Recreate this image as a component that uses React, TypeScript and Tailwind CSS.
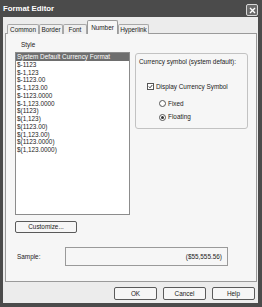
const formats = [
  'System Default Currency Format',
  '$-1123',
  '$-1,123',
  '$-1123.00',
  '$-1,123.00',
  '$-1123.0000',
  '$-1,123.0000',
  '$(1123)',
  '$(1,123)',
  '$(1123.00)',
  '$(1,123.00)',
  '$(1123.0000)',
  '$(1,123.0000)',
];

const tabs = [
  { label: 'Common', w: 'w-[32px]' },
  { label: 'Border', w: 'w-[24px]' },
  { label: 'Font', w: 'w-[24px]' },
  { label: 'Number', w: 'w-[31px]', active: true },
  { label: 'Hyperlink', w: 'w-[31px]' },
];

function Button({ label, className }: { label: string; className: string }) {
  return (
    <div
      className={`flex items-center justify-center rounded-[2px] border border-[#5a5a5a] bg-[#f6f6f6] text-[6.4px] text-[#222] ${className}`}
    >
      {label}
    </div>
  );
}

function Radio({ checked }: { checked?: boolean }) {
  return (
    <span className="flex h-[7px] w-[7px] items-center justify-center rounded-full border border-[#555] bg-white">
      {checked && <span className="h-[3px] w-[3px] rounded-full bg-[#333]" />}
    </span>
  );
}

export default function App() {
  return (
    <div className="flex h-[307px] w-[262px] flex-col bg-[#4b4b4b] font-['Liberation_Sans',Arial,sans-serif] text-[#222]">
      {/* barra de título */}
      <div className="flex h-[17px] items-center justify-between pl-[3px] pr-[4px]">
        <span className="text-[7.8px] font-bold text-white">Format Editor</span>
        <span className="mt-[3px] flex h-[12px] w-[12px] items-center justify-center rounded-[2px] border border-[#d8d8d8] bg-[#6a6a6a]">
          <svg width="7" height="7" viewBox="0 0 7 7">
            <path d="M1 1L6 6M6 1L1 6" stroke="white" strokeWidth="1.4" />
          </svg>
        </span>
      </div>

      {/* corpo */}
      <div className="mx-[3px] mb-[4px] mr-[4px] flex flex-1 flex-col bg-[#ececec] pt-[3px]">
        <div className="relative z-10 flex h-[14px] items-end pl-[4px] -mb-[1px]">
          {tabs.map((t) =>
            t.active ? (
              <div
                key={t.label}
                className={`${t.w} flex h-[14px] items-center justify-center rounded-t-[2px] border border-b-0 border-[#9a9a9a] bg-[#f6f6f6] text-[6.4px]`}
              >
                {t.label}
              </div>
            ) : (
              <div
                key={t.label}
                className={`${t.w} flex h-[10px] items-center justify-center rounded-t-[2px] border border-b-0 border-[#a8a8a8] bg-[#efefef] text-[6.4px]`}
              >
                {t.label}
              </div>
            ),
          )}
        </div>

        <div className="ml-[2px] mr-[1px] flex h-[249px] flex-col border border-[#9a9a9a] bg-[#f6f6f6] pl-[9px] pt-[7px]">
          <div className="flex items-start">
            <div className="flex flex-col">
              <span className="ml-[6px] text-[6.4px] leading-[8px]">Style</span>
              <div className="mt-[3px] h-[163px] w-[115px] border border-[#8c8c8c] bg-white">
                {formats.map((f, i) => (
                  <div
                    key={f}
                    className={`h-[7.75px] pl-[1px] text-[6.4px] leading-[7.75px] ${i === 0 ? 'bg-[#6e6e6e] text-white' : 'text-[#222]'}`}
                  >
                    {f}
                  </div>
                ))}
              </div>
              <Button label="Customize..." className="mt-[6px] h-[12px] w-[62px]" />
            </div>

            <div className="ml-[5px] mt-[12px] flex h-[76px] w-[113px] flex-col rounded-[3px] border border-[#c2c2c2] pl-[3px] pt-[4px] text-[6.4px]">
              <span className="leading-[8px]">Currency symbol (system default):</span>
              <div className="ml-[8px] mt-[16px] flex items-center gap-[2px]">
                <span className="flex h-[7px] w-[7px] items-center justify-center border border-[#555] bg-white">
                  <svg width="5" height="5" viewBox="0 0 5 5">
                    <path d="M0.8 2.5L2 3.8L4.3 1" stroke="#222" strokeWidth="0.9" fill="none" />
                  </svg>
                </span>
                <span>Display Currency Symbol</span>
              </div>
              <div className="ml-[20px] mt-[7px] flex items-center gap-[2px]">
                <Radio />
                <span>Fixed</span>
              </div>
              <div className="ml-[20px] mt-[4px] flex items-center gap-[2px]">
                <Radio checked />
                <span>Floating</span>
              </div>
            </div>
          </div>

          <div className="mt-[14px] flex items-center">
            <span className="ml-[2px] w-[48px] text-[6.4px]">Sample:</span>
            <div className="flex h-[19px] w-[163px] items-center justify-end border border-[#9a9a9a] pr-[5px] text-[6.4px]">
              ($55,555.56)
            </div>
          </div>
        </div>

        <div className="mt-[5px] flex justify-end gap-[6px] pr-[3px]">
          <Button label="OK" className="h-[13px] w-[43px]" />
          <Button label="Cancel" className="h-[13px] w-[43px]" />
          <Button label="Help" className="h-[13px] w-[43px]" />
        </div>
      </div>
    </div>
  );
}
